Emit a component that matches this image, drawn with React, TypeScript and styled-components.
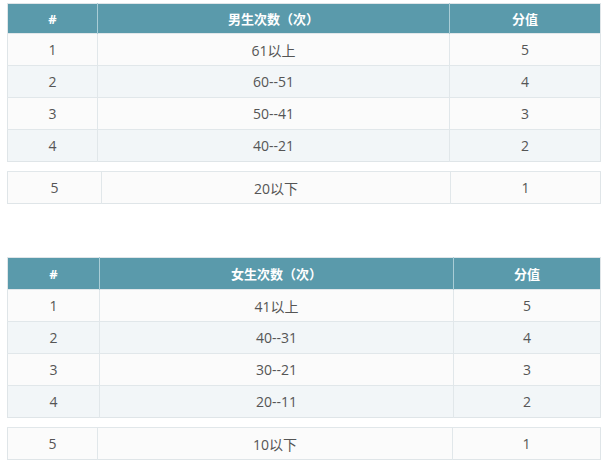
import React from "react";
import styled, { createGlobalStyle } from "styled-components";

const Global = createGlobalStyle`
  html, body { margin: 0; padding: 0; background: #ffffff; }
  body { font-family: "Open Sans", "Noto Sans CJK SC", sans-serif; }
`;

const Page = styled.div`
  width: 604px;
  padding: 3px 4px 0 7px;
  box-sizing: border-box;
  display: flex;
  flex-direction: column;
`;

const Section = styled.section<{ $gap?: number }>`
  display: flex;
  flex-direction: column;
  gap: 9px;
  margin-bottom: ${(p) => p.$gap ?? 0}px;
`;

const Table = styled.table`
  width: 593px;
  border-collapse: collapse;
  table-layout: fixed;
  border: 1px solid #dfe5e8;
`;

const HeadCell = styled.th<{ $h: number }>`
  height: ${(p) => p.$h}px;
  padding: 0;
  background: #5a9aab;
  color: #ffffff;
  font-size: 13px;
  font-weight: 700;
  text-align: center;
  border-left: 1px solid #a9cdd6;
  &:first-child { border-left: none; }
`;

const Row = styled.tr<{ $alt?: boolean }>`
  background: ${(p) => (p.$alt ? "#f2f6f8" : "#fbfbfb")};
`;

const Cell = styled.td`
  height: 31px;
  padding: 0;
  color: #555555;
  font-size: 14px;
  text-align: center;
  border-top: 1px solid #e1e7ea;
  border-left: 1px solid #e1e7ea;
  &:first-child { border-left: none; }
`;

const LoneRow = styled.tr`
  background: #fbfbfb;
`;

type Data = {
  title: string;
  head: number;
  cols: [number, number, number];
  rows: string[];
  last: string;
  lastCols: [number, number, number];
  gap?: number;
};

const tables: Data[] = [
  {
    title: "男生次数（次）",
    head: 29,
    cols: [90, 352, 151],
    rows: ["61以上", "60--51", "50--41", "40--21"],
    last: "20以下",
    lastCols: [94, 349, 150],
    gap: 53,
  },
  {
    title: "女生次数（次）",
    head: 31,
    cols: [92, 354, 147],
    rows: ["41以上", "40--31", "30--21", "20--11"],
    last: "10以下",
    lastCols: [90, 355, 148],
  },
];

const ScoreTable: React.FC<{ d: Data }> = ({ d }) => (
  <Section $gap={d.gap}>
    <Table>
      <colgroup>
        {d.cols.map((w, i) => (
          <col key={i} style={{ width: w }} />
        ))}
      </colgroup>
      <thead>
        <tr>
          <HeadCell $h={d.head}>#</HeadCell>
          <HeadCell $h={d.head}>{d.title}</HeadCell>
          <HeadCell $h={d.head}>分值</HeadCell>
        </tr>
      </thead>
      <tbody>
        {d.rows.map((r, i) => (
          <Row key={i} $alt={i % 2 === 1}>
            <Cell>{i + 1}</Cell>
            <Cell>{r}</Cell>
            <Cell>{5 - i}</Cell>
          </Row>
        ))}
      </tbody>
    </Table>
    <Table>
      <colgroup>
        {d.lastCols.map((w, i) => (
          <col key={i} style={{ width: w }} />
        ))}
      </colgroup>
      <tbody>
        <LoneRow>
          <Cell>5</Cell>
          <Cell>{d.last}</Cell>
          <Cell>1</Cell>
        </LoneRow>
      </tbody>
    </Table>
  </Section>
);

export default function App() {
  return (
    <>
      <Global />
      <Page>
        {tables.map((d, i) => (
          <ScoreTable key={i} d={d} />
        ))}
      </Page>
    </>
  );
}
